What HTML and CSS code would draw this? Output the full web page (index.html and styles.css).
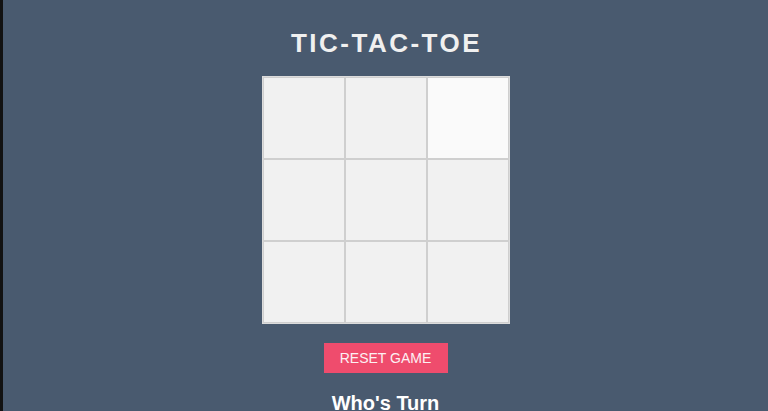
FILE: index.html
```html
<!DOCTYPE html>
<html lang="en">
<head>
    <meta charset="UTF-8">
    <meta name="viewport" content="width=device-width, initial-scale=1.0">
    <title>Tic-Tac-Toe</title>
    <link rel="stylesheet" href="styles.css">
</head>
<body>

<div class="game">
    <h1 class="title">TIC-TAC-TOE</h1>

    <div class="board" id="board">
        <div class="cell" data-i="0"></div>
        <div class="cell" data-i="1"></div>
        <div class="cell hover" data-i="2"></div>
        <div class="cell" data-i="3"></div>
        <div class="cell" data-i="4"></div>
        <div class="cell" data-i="5"></div>
        <div class="cell" data-i="6"></div>
        <div class="cell" data-i="7"></div>
        <div class="cell" data-i="8"></div>
    </div>

    <button class="reset" type="button">Reset Game</button>

    <h2 class="turn">Who's Turn</h2>
</div>

</body>
</html>
```

FILE: styles.css
```css
html, body {
    height: 100%;
}
body {
    font-family: "Liberation Sans", Arial, sans-serif;
    background-color: #495a6f;
    margin: 0;
    padding: 0;
    border-left: 3px solid #121212;
    overflow: hidden;
}
.game {
    display: flex;
    flex-direction: column;
    align-items: center;
    padding-top: 28px;
}
.title {
    margin: 0 0 18px 0;
    font-size: 26px;
    line-height: 30px;
    letter-spacing: 2.5px;
    color: #f0f0f0;
    padding-left: 2px;
}
.board {
    display: grid;
    grid-template-columns: repeat(3, 82px);
    grid-template-rows: repeat(3, 82px);
    border: 1px solid #dcdcdc;
    background-color: #dcdcdc;
}
.cell {
    background-color: #f1f1f1;
    border: 1px solid #cfcfcf;
    cursor: pointer;
}
.cell.hover {
    background-color: #fafafa;
}
.reset {
    margin-top: 19px;
    width: 124px;
    height: 30px;
    border: none;
    background-color: #ef4c6d;
    color: #fdf0f3;
    font-family: "Liberation Sans", Arial, sans-serif;
    font-size: 14px;
    text-transform: uppercase;
    cursor: pointer;
}
.turn {
    margin: 18px 0 0 0;
    font-size: 20px;
    line-height: 24px;
    color: #fff;
}
```
